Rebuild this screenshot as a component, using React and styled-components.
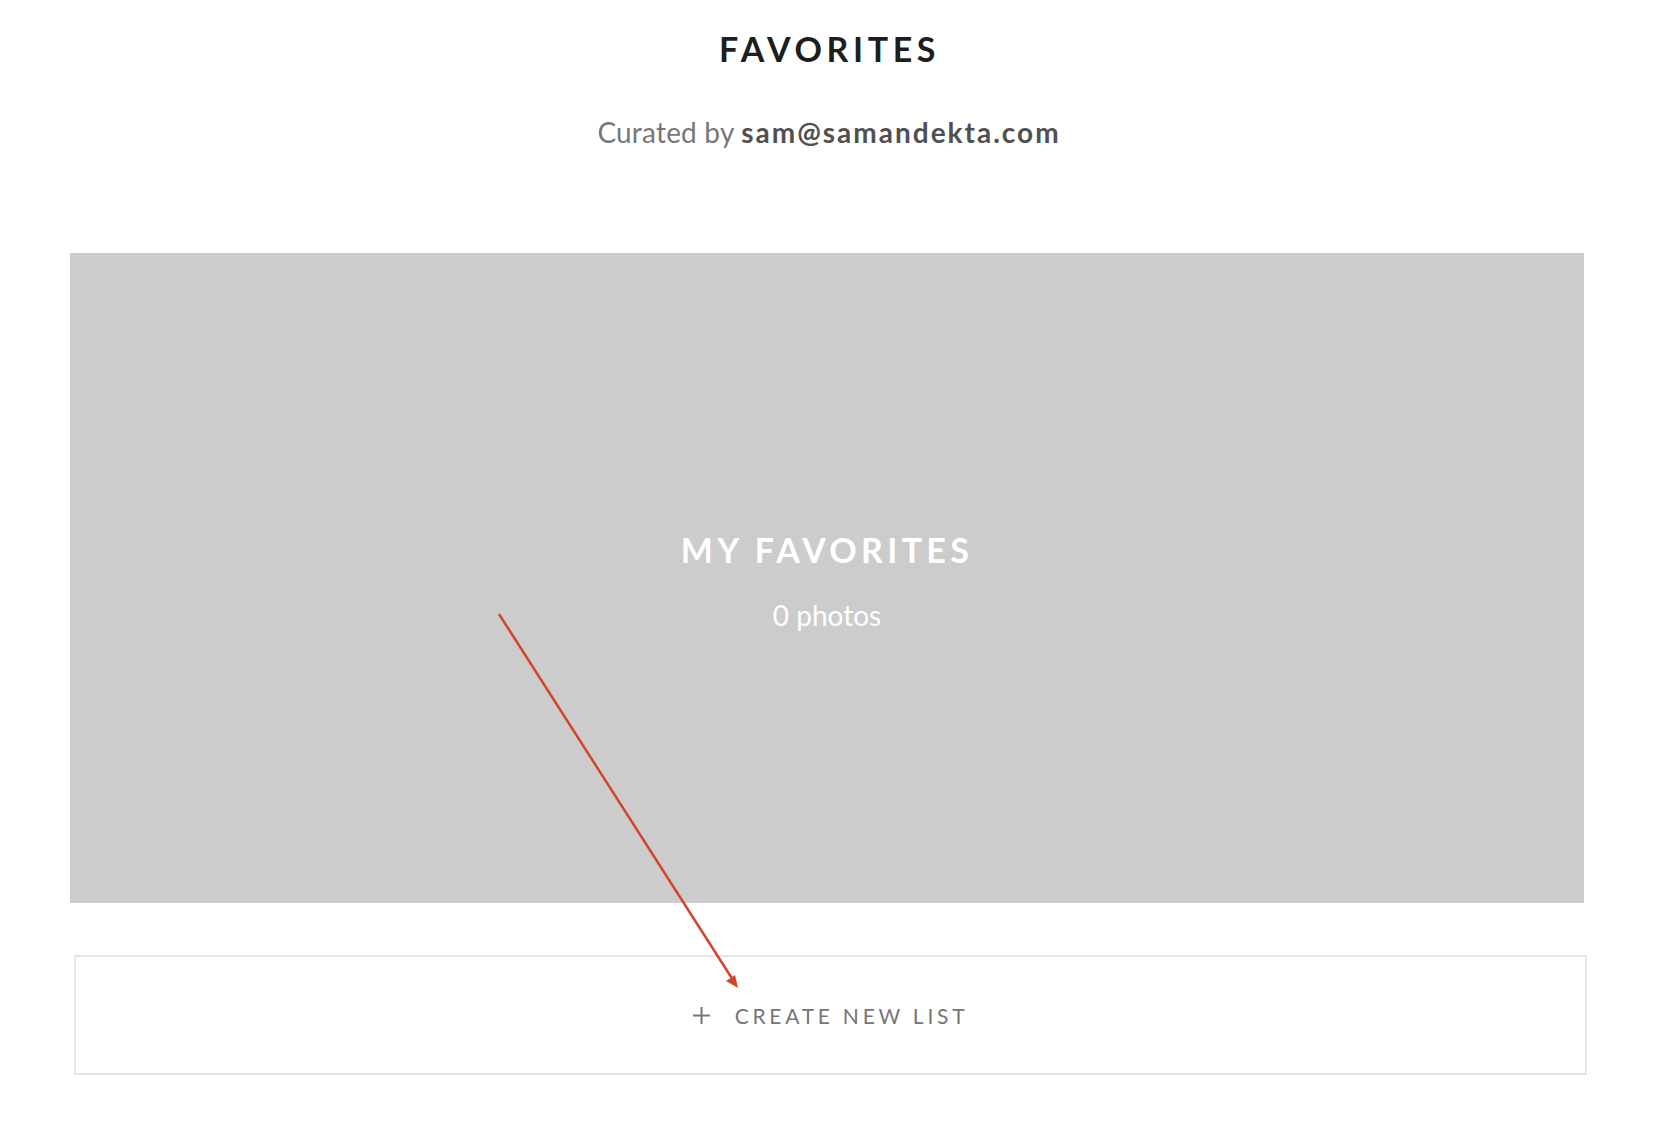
import React from 'react';
import styled, { createGlobalStyle } from 'styled-components';

const GlobalStyle = createGlobalStyle`
  html, body {
    margin: 0;
    padding: 0;
    background: #ffffff;
  }
  body {
    font-family: Lato, "Open Sans", sans-serif;
  }
`;

const Page = styled.div`
  position: relative;
  width: 1654px;
  min-height: 1132px;
  padding: 28px 70px 0;
  box-sizing: border-box;
`;

const Header = styled.header`
  display: flex;
  flex-direction: column;
  align-items: center;
`;

const Title = styled.h1`
  margin: 0;
  font-size: 34px;
  line-height: 42px;
  font-weight: 700;
  letter-spacing: 4.6px;
  color: #1e1e1e;
  padding-left: 5px;
`;

const Curator = styled.p`
  margin: 45px 0 0;
  font-size: 28px;
  line-height: 34px;
  color: #777777;
  letter-spacing: 0.2px;
  padding-left: 4px;
`;

const Email = styled.span`
  font-weight: 700;
  color: #505050;
  letter-spacing: 2px;
`;

const ListCard = styled.div`
  margin-top: 104px;
  height: 650px;
  background: #cccccc;
  display: flex;
  flex-direction: column;
  align-items: center;
  justify-content: center;
  padding-top: 4px;
  box-sizing: border-box;
`;

const CardTitle = styled.h2`
  margin: 0;
  font-size: 34px;
  line-height: 42px;
  font-weight: 700;
  letter-spacing: 4.3px;
  color: #ffffff;
`;

const CardCount = styled.div`
  margin-top: 27px;
  font-size: 28px;
  line-height: 34px;
  color: #ffffff;
`;

const CreateButton = styled.button`
  display: flex;
  align-items: center;
  justify-content: center;
  gap: 25px;
  width: calc(100% - 1px);
  margin: 52px 0 0 4px;
  height: 120px;
  background: #ffffff;
  border: 2px solid #e6e6e6;
  font-family: Lato, "Open Sans", sans-serif;
  font-size: 21px;
  letter-spacing: 3.75px;
  color: #767676;
  cursor: pointer;
`;

const Overlay = styled.svg`
  position: absolute;
  left: 0;
  top: 0;
  pointer-events: none;
`;

const PlusIcon = () => (
  <svg width="17" height="17" viewBox="0 0 17 17">
    <path d="M8.5 0v17M0 8.5h17" stroke="#777" strokeWidth="2" fill="none" />
  </svg>
);

const App = () => {
  return (
    <Page>
      <GlobalStyle />
      <Header>
        <Title>FAVORITES</Title>
        <Curator>
          Curated by <Email>sam@samandekta.com</Email>
        </Curator>
      </Header>
      <ListCard>
        <CardTitle>MY FAVORITES</CardTitle>
        <CardCount>0 photos</CardCount>
      </ListCard>
      <CreateButton>
        <PlusIcon />
        CREATE NEW LIST
      </CreateButton>
      <Overlay width="1654" height="1132" viewBox="0 0 1654 1132">
        <line x1="499" y1="614" x2="733" y2="980" stroke="#d2452c" strokeWidth="2.5" />
        <polygon points="738,988 726,981 735,975" fill="#d2452c" />
      </Overlay>
    </Page>
  );
};

export default App;
